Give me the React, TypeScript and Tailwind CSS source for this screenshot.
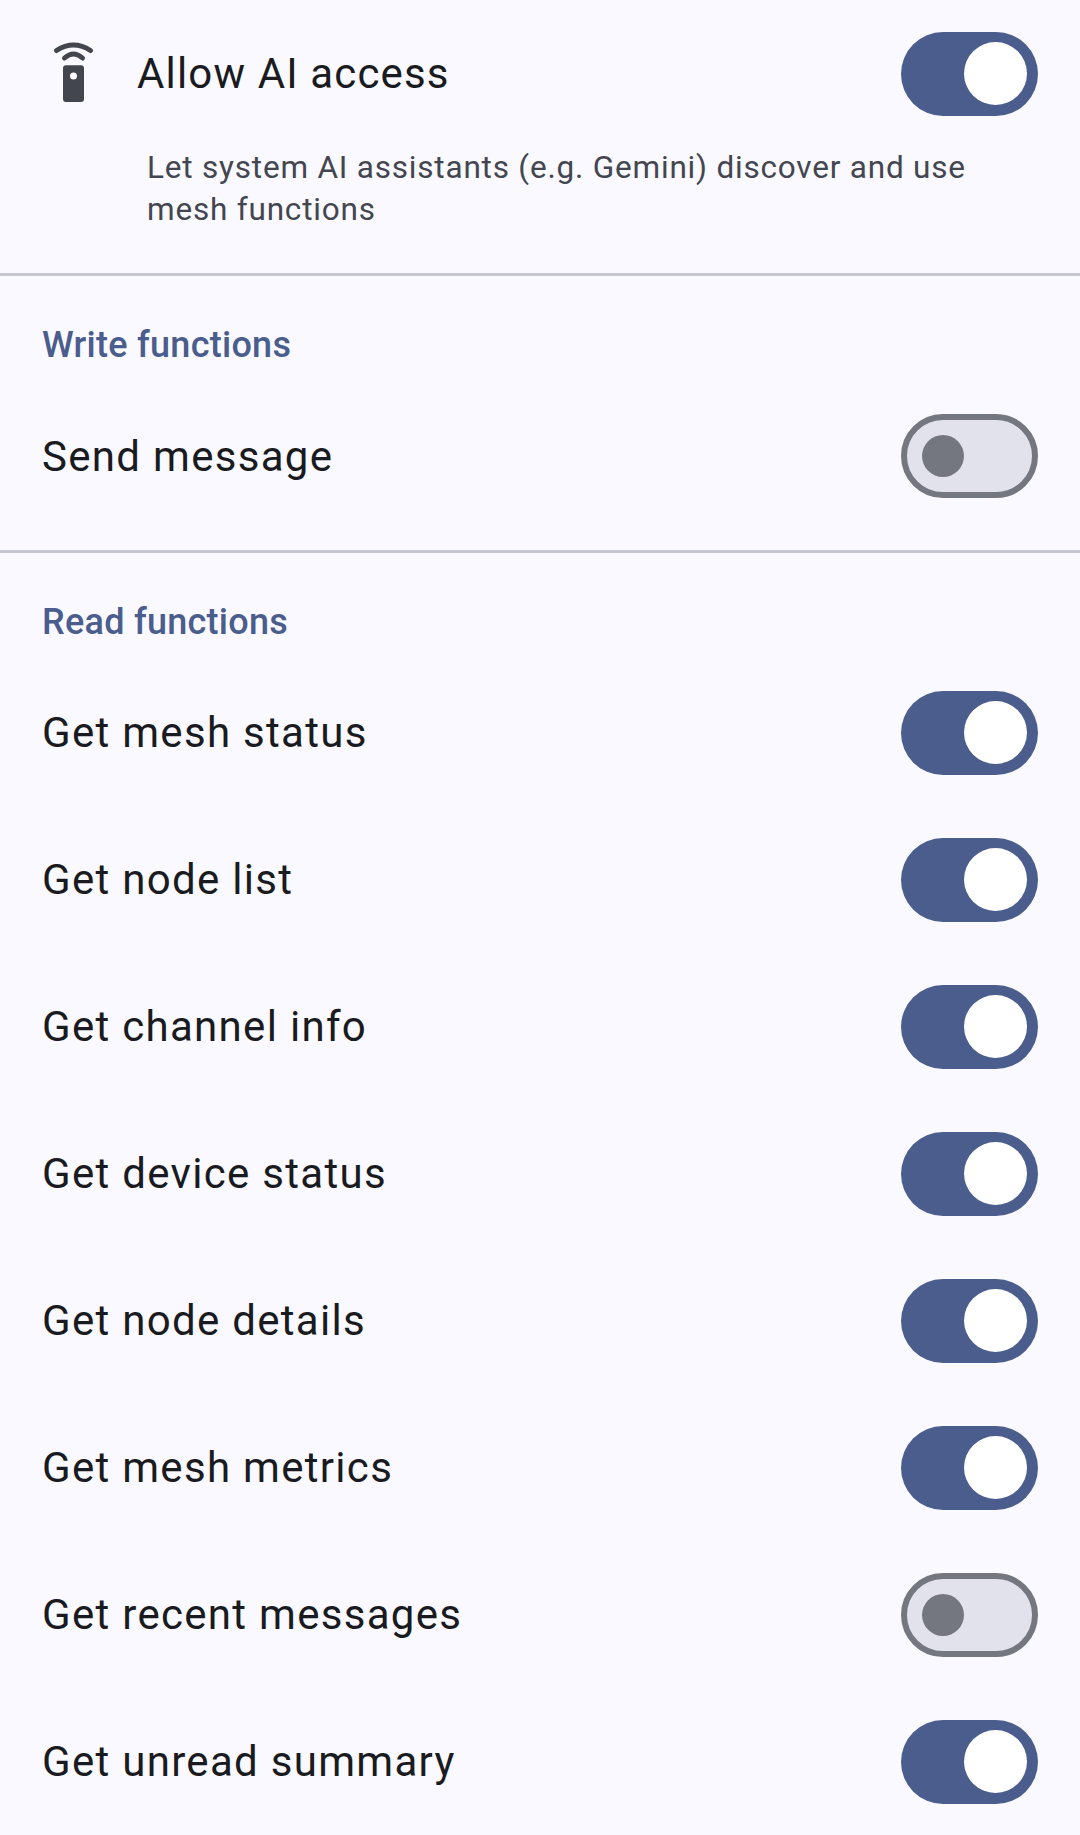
type ToggleRow = {
  label: string;
  on: boolean;
};

const readFunctions: ToggleRow[] = [
  { label: "Get mesh status", on: true },
  { label: "Get node list", on: true },
  { label: "Get channel info", on: true },
  { label: "Get device status", on: true },
  { label: "Get node details", on: true },
  { label: "Get mesh metrics", on: true },
  { label: "Get recent messages", on: false },
  { label: "Get unread summary", on: true },
];

const Toggle = ({ on }: { on: boolean }) =>
  on ? (
    <div className="flex h-[84px] w-[137px] shrink-0 items-center justify-end rounded-full bg-[#4a5d8c] pr-[11px]">
      <div className="h-[63px] w-[63px] rounded-full bg-white" />
    </div>
  ) : (
    <div className="flex h-[84px] w-[137px] shrink-0 items-center rounded-full border-[6px] border-[#757780] bg-[#e1e2ec] pl-[15px]">
      <div className="h-[42px] w-[42px] rounded-full bg-[#757780]" />
    </div>
  );

const Row = ({ label, on }: ToggleRow) => (
  <div className="flex h-[147px] items-center justify-between px-[42px]">
    <span className="text-[42px] leading-[63px] tracking-[1.3px] text-[#1a1b20]">{label}</span>
    <Toggle on={on} />
  </div>
);

const SectionTitle = ({ children }: { children: string }) => (
  <h2 className="px-[42px] pt-[43px] pb-[11px] text-[36px] leading-[52.5px] font-medium tracking-[0.27px] text-[#4a5d8c]">
    {children}
  </h2>
);

const Divider = () => <div className="h-[3px] bg-[#c5c6d0]" />;

const App = () => {
  return (
    <div className="h-[1835px] overflow-hidden bg-[#f9f9ff] font-['Roboto',sans-serif]">
      <div className="flex h-[147px] items-center justify-between px-[42px]">
        <div className="flex items-center gap-[32px]">
          <svg width="63" height="63" viewBox="0 0 63 63" fill="none" className="shrink-0">
            <path d="M14.5 8.5Q31.5 -2.5 48.5 8.5" stroke="#44464f" strokeWidth="5" strokeLinecap="round" />
            <path d="M22.5 16Q31.5 8 40.5 16" stroke="#44464f" strokeWidth="5" strokeLinecap="round" />
            <path
              fillRule="evenodd"
              d="M24 23.3H39A3 3 0 0 1 42 26.3V57A3 3 0 0 1 39 60H24A3 3 0 0 1 21 57V26.3A3 3 0 0 1 24 23.3ZM31.5 30.5A3.5 3.5 0 1 0 31.5 37.5A3.5 3.5 0 1 0 31.5 30.5Z"
              fill="#44464f"
            />
          </svg>
          <span className="text-[42px] leading-[63px] tracking-[1.15px] text-[#1a1b20]">Allow AI access</span>
        </div>
        <Toggle on />
      </div>
      <p className="pr-[42px] pb-[42px] pl-[147px] text-[31.5px] leading-[42px] tracking-[0.8px] text-[#44464f]">
        Let system AI assistants (e.g. Gemini) discover and use mesh functions
      </p>
      <Divider />
      <SectionTitle>Write functions</SectionTitle>
      <Row label="Send message" on={false} />
      <div className="pt-[20px]">
        <Divider />
      </div>
      <SectionTitle>Read functions</SectionTitle>
      {readFunctions.map((row) => (
        <Row key={row.label} label={row.label} on={row.on} />
      ))}
    </div>
  );
};

export default App;
